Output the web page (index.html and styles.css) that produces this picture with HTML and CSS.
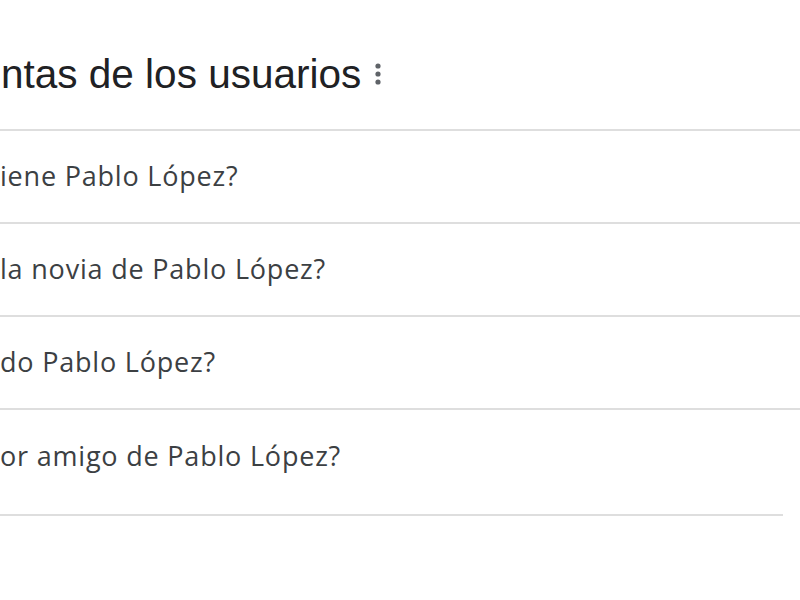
FILE: index.html
```html
<!DOCTYPE html>
<html lang="es">
<head>
    <meta charset="UTF-8">
    <meta name="viewport" content="width=device-width, initial-scale=1.0">
    <title>Preguntas de los usuarios</title>
    <link rel="stylesheet" href="styles.css">
</head>
<body>
    <section class="paa">
        <div class="paa-head">
            <h2>ntas de los usuarios</h2>
            <svg class="kebab" width="8" height="24" viewBox="0 0 8 24">
                <circle cx="4" cy="4" r="2.6"/>
                <circle cx="4" cy="12" r="2.6"/>
                <circle cx="4" cy="20" r="2.6"/>
            </svg>
        </div>

        <div class="paa-list">
            <div class="paa-row">iene Pablo López?</div>
            <div class="paa-row">la novia de Pablo López?</div>
            <div class="paa-row">do Pablo López?</div>
            <div class="paa-row last">or amigo de Pablo López?</div>
            <div class="paa-foot"></div>
        </div>
    </section>
</body>
</html>
```

FILE: styles.css
```css
body {
    margin: 0;
    padding: 0;
    background-color: #fff;
    font-family: 'Liberation Sans', Arial, sans-serif;
}

.paa-head {
    display: flex;
    align-items: center;
    gap: 13px;
    height: 129px;
    padding-left: 1px;
}

.paa-head h2 {
    margin: 0;
    font-size: 40.5px;
    font-weight: normal;
    color: #202124;
    margin-top: 20px;
}

.kebab {
    fill: #5f6368;
    margin-top: 18px;
}

.paa-list {
    display: flex;
    flex-direction: column;
}

.paa-row {
    height: 93px;
    display: flex;
    align-items: center;
    border-top: 2px solid #dedede;
    font-family: 'Open Sans', 'Liberation Sans', sans-serif;
    font-size: 27px;
    letter-spacing: 0.8px;
    color: #3c4043;
    padding-bottom: 2px;
    box-sizing: border-box;
}

.paa-row.last {
    height: 106px;
    padding-bottom: 14px;
}

.paa-foot {
    width: 783px;
    border-top: 2px solid #dedede;
}
```
